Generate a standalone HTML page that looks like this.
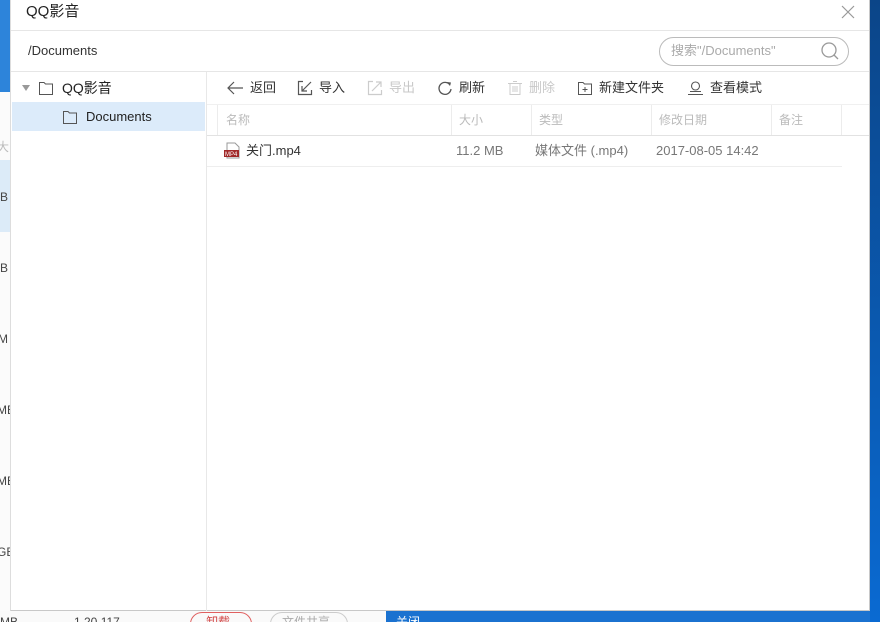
<!DOCTYPE html>
<html style="width:880px;height:622px;overflow:hidden"><head><meta charset="utf-8"><style>
*{margin:0;padding:0;box-sizing:border-box}
body{width:880px;height:622px;overflow:hidden;position:relative;background:#fff;font-family:"Liberation Sans","Noto Sans CJK SC",sans-serif;color:#333}
.abs{position:absolute}
.bg-blue{left:870px;top:0;width:10px;height:622px;background:linear-gradient(#0b4588,#0a6ad2)}
.dlg{left:10px;top:0;width:860px;height:611px;background:#fff;border-right:1px solid #c8c8c8;border-bottom:1px solid #c8c8c8;border-left:1px solid #ddd}
.t{font-size:13px;white-space:nowrap;line-height:16px}
.hline{height:1px;background:#e6e6e6}
.tb{font-size:13px;color:#333;display:flex;align-items:center;gap:6px;line-height:16px}
.tb.dis{color:#c8c8c8}
.hd{font-size:12px;color:#bbb;line-height:16px}
.vs{width:1px;height:30px;background:#ececec;top:105px}
</style></head><body>
<div class="abs" style="left:0;top:0;width:11px;height:92px;background:#2d84da"></div>
<div class="abs" style="left:0;top:92px;width:11px;height:530px;background:#fbfbfb"></div>
<div class="abs" style="left:0;top:160px;width:11px;height:72px;background:#dcebf8"></div>
<div class="abs t" style="left:-3px;top:139px;font-size:12px;color:#bbb">大</div>
<div class="abs t" style="left:0;top:189px;font-size:12px;color:#444">B</div>
<div class="abs t" style="left:0;top:260px;font-size:12px;color:#444">B</div>
<div class="abs t" style="left:-2px;top:331px;font-size:12px;color:#444">M</div>
<div class="abs t" style="left:-3px;top:402px;font-size:12px;color:#444">MB</div>
<div class="abs t" style="left:-3px;top:473px;font-size:12px;color:#444">MB</div>
<div class="abs t" style="left:-3px;top:544px;font-size:12px;color:#444">GB</div>
<div class="abs" style="left:0;top:611px;width:880px;height:11px;overflow:hidden;background:#fafafa">
<div class="abs" style="left:386px;top:0;width:494px;height:11px;background:#1b72d0"></div>
<div class="abs t" style="left:0;top:3px;font-size:12px;color:#444">MB</div>
<div class="abs t" style="left:74px;top:3px;font-size:12px;color:#444">1.20.117</div>
<div class="abs" style="left:190px;top:1px;width:62px;height:24px;border:1px solid #e06060;border-radius:12px"></div>
<div class="abs t" style="left:206px;top:3px;font-size:12px;color:#d04040">卸载</div>
<div class="abs" style="left:270px;top:1px;width:78px;height:24px;border:1px solid #ccc;border-radius:12px"></div>
<div class="abs t" style="left:282px;top:3px;font-size:12px;color:#aaa">文件共享</div>
<div class="abs t" style="left:396px;top:3px;font-size:12px;color:#fff">关闭 ...</div>
</div>
<div class="abs bg-blue"></div>

<div class="abs dlg"></div>
<div class="abs" style="left:26px;top:3px;font-size:15px;line-height:18px;color:#222">QQ影音</div>
<svg class="abs" style="left:841px;top:5px" width="14" height="14"><path d="M1 1L13 13M13 1L1 13" stroke="#999" stroke-width="1.2"/></svg>
<div class="abs hline" style="left:11px;top:30px;width:858px"></div>
<div class="abs t" style="left:28px;top:43px;color:#333">/Documents</div>
<div class="abs" style="left:659px;top:37px;width:190px;height:29px;border:1px solid #bbb;border-radius:15px"></div>
<div class="abs t" style="left:671px;top:43px;color:#aaa">搜索"/Documents"</div>
<svg class="abs" style="left:820px;top:41px" width="20" height="20"><circle cx="9" cy="9" r="7" fill="none" stroke="#999" stroke-width="1.3"/><path d="M14 14L18 18" stroke="#999" stroke-width="1.3"/></svg>
<div class="abs hline" style="left:11px;top:71px;width:858px"></div>

<div class="abs" style="left:206px;top:72px;width:1px;height:539px;background:#e8e8e8"></div>
<svg class="abs" style="left:22px;top:84px" width="8" height="8"><path d="M0 1H8L4 7Z" fill="#999"/></svg>
<svg class="abs" style="left:38px;top:80px" width="16" height="16"><path d="M1.5 2.5H6L7.5 4H14.5V14.5H1.5Z" fill="none" stroke="#555" stroke-width="1"/></svg>
<div class="abs" style="left:62px;top:79px;font-size:14px;line-height:18px;color:#222">QQ影音</div>
<div class="abs" style="left:12px;top:102px;width:193px;height:29px;background:#dcebfa"></div>
<svg class="abs" style="left:62px;top:109px" width="16" height="16"><path d="M1.5 2.5H6L7.5 4H14.5V14.5H1.5Z" fill="none" stroke="#555" stroke-width="1"/></svg>
<div class="abs t" style="left:86px;top:109px;color:#222">Documents</div>

<div class="abs tb" style="left:226px;top:80px"><svg width="18" height="16"><path d="M2 8H17M8 2L2 8L8 14" fill="none" stroke="#555" stroke-width="1.2"/></svg>返回</div>
<div class="abs tb" style="left:297px;top:80px"><svg width="16" height="16"><path d="M6 1.5H1.5V14.5H14.5V10M14 2L5 11M5 6V11H10" fill="none" stroke="#555" stroke-width="1.2"/></svg>导入</div>
<div class="abs tb dis" style="left:367px;top:80px"><svg width="16" height="16"><path d="M6 1.5H1.5V14.5H14.5V10M5 11L14 2M9 2H14V7" fill="none" stroke="#ccc" stroke-width="1.2"/></svg>导出</div>
<div class="abs tb" style="left:437px;top:80px"><svg width="16" height="16"><path d="M13 5A6 6 0 1 0 14 9" fill="none" stroke="#555" stroke-width="1.3"/><path d="M10 2L14 2.5L13 6Z" fill="#555"/></svg>刷新</div>
<div class="abs tb dis" style="left:507px;top:80px"><svg width="16" height="16"><path d="M1 3.5H15M3 3.5V14.5H13V3.5M6 1.5H10M6 6V12M8 6V12M10 6V12" fill="none" stroke="#ccc" stroke-width="1"/></svg>删除</div>
<div class="abs tb" style="left:577px;top:80px"><svg width="16" height="16"><path d="M1.5 2.5H6L7.5 4H14.5V14.5H1.5ZM8 7V12M5.5 9.5H10.5" fill="none" stroke="#555" stroke-width="1"/></svg>新建文件夹</div>
<div class="abs tb" style="left:687px;top:80px"><svg width="17" height="16"><circle cx="8.5" cy="6" r="4" fill="none" stroke="#555" stroke-width="1.1"/><path d="M3 11.5H14M1 14.5H16" stroke="#555" stroke-width="1.1"/></svg>查看模式</div>

<div class="abs hline" style="left:207px;top:104px;width:662px;background:#f0f0f0"></div>
<div class="abs vs" style="left:217px"></div>
<div class="abs vs" style="left:451px"></div>
<div class="abs vs" style="left:531px"></div>
<div class="abs vs" style="left:651px"></div>
<div class="abs vs" style="left:771px"></div>
<div class="abs vs" style="left:841px"></div>
<div class="abs hd" style="left:226px;top:112px">名称</div>
<div class="abs hd" style="left:459px;top:112px">大小</div>
<div class="abs hd" style="left:539px;top:112px">类型</div>
<div class="abs hd" style="left:659px;top:112px">修改日期</div>
<div class="abs hd" style="left:779px;top:112px">备注</div>
<div class="abs hline" style="left:207px;top:135px;width:662px;background:#e2e2e2"></div>

<svg class="abs" style="left:223px;top:142px" width="18" height="18"><path d="M4 1H12L16 5V16H4Z" fill="#fff" stroke="#999"/><rect x="1" y="8" width="15" height="7" fill="#a02828"/><text x="2" y="14" font-size="6" fill="#fff" font-family="Liberation Sans">MP4</text></svg>
<div class="abs t" style="left:246px;top:143px;color:#333">关门.mp4</div>
<div class="abs t" style="left:456px;top:143px;color:#777">11.2 MB</div>
<div class="abs t" style="left:535px;top:143px;color:#777">媒体文件 (.mp4)</div>
<div class="abs t" style="left:656px;top:143px;color:#777">2017-08-05 14:42</div>
<div class="abs hline" style="left:207px;top:166px;width:635px;background:#eee"></div>
</body></html>
